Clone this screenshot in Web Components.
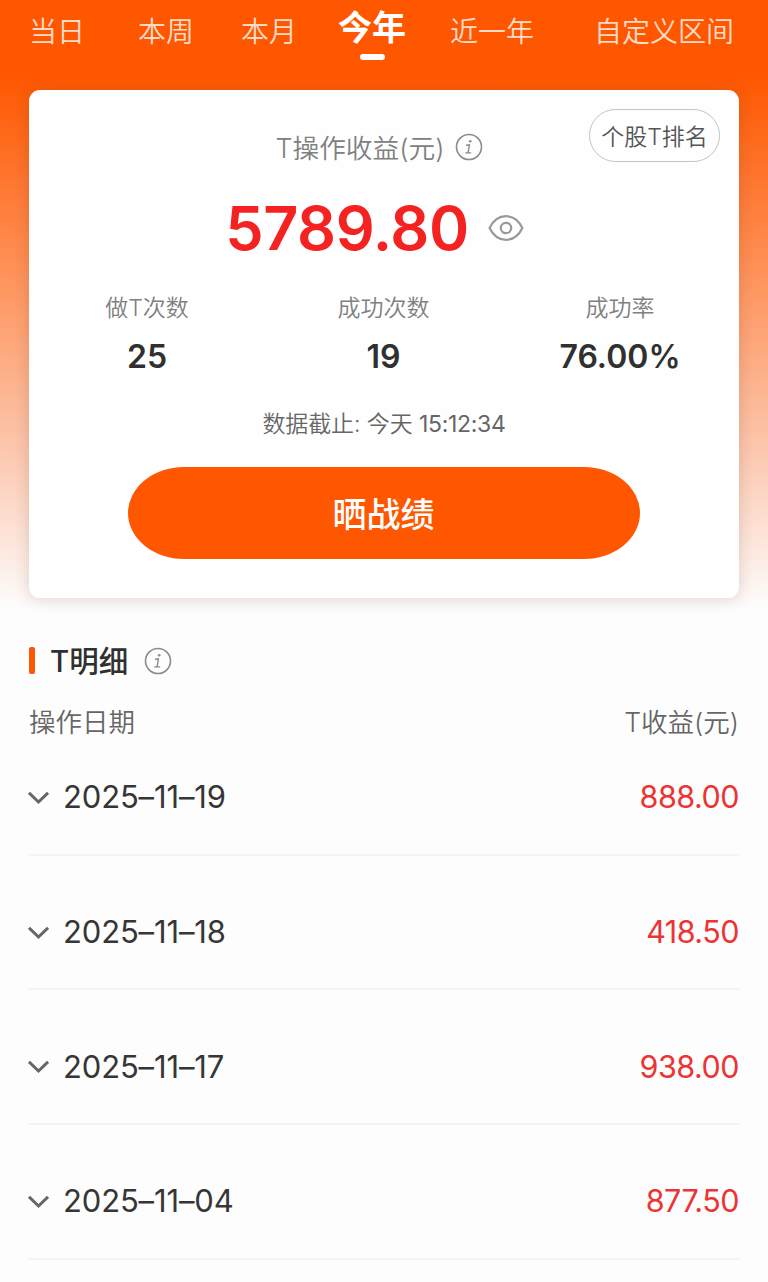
<!DOCTYPE html>
<html lang="zh-CN">
<head>
<meta charset="utf-8">
<title>T操作收益</title>
<style>
body{margin:0;background:#fdfdfd;font-family:Inter,"Noto Sans CJK SC",sans-serif;-webkit-font-smoothing:antialiased}
</style>
</head>
<body>
<profit-page></profit-page>
<script>
const define = (name, html) => {
  const t = document.createElement('template');
  t.innerHTML = html;
  customElements.define(name, class extends HTMLElement {
    constructor() {
      super();
      this.attachShadow({ mode: 'open' }).append(t.content.cloneNode(true));
    }
  });
};

define('period-tab', `<style>
:host{display:flex;flex-direction:column;align-items:center;height:64px;font-size:28px;font-weight:350;line-height:64px;color:#ffdcc8;white-space:nowrap}
:host([active]){font-size:34px;font-weight:700;line-height:56px;color:#fff}
i{display:none;width:25px;height:6px;margin-top:-2px;border-radius:3px;background:#fff}
:host([active]) i{display:block}
</style><slot></slot><i></i>`);

define('period-tabs', `<style>
:host{display:flex;height:90px;padding-left:29px}
</style><slot></slot>`);

define('info-icon', `<style>
:host{display:block;width:28px;height:28px}svg{display:block}
</style><svg width="28" height="28" viewBox="0 0 28 28" fill="none" stroke="#8c8c8c" stroke-linecap="round" stroke-linejoin="round">
<circle cx="14" cy="14" r="12.500" stroke-width="1.600"/>
<path d="M11.600 12.300 14.500 11.800 13 19.800M10.800 19.900H15.600" stroke-width="1.400"/><circle cx="15.200" cy="8.200" r="1.300" fill="#8c8c8c" stroke="none"/></svg>`);

define('eye-icon', `<style>
:host{display:block;width:36px;height:28px}svg{display:block}
</style><svg width="36" height="28" viewBox="0 0 36 28" fill="none" stroke="#999" stroke-width="2.200" stroke-linejoin="round">
<path d="M1.600 14C5.500 6 11.200 2.200 18 2.200S30.500 6 34.400 14C30.500 22 24.800 25.800 18 25.800S5.500 22 1.600 14Z"/><circle cx="18" cy="14" r="5.200"/></svg>`);

define('rank-button', `<style>
:host{display:flex;box-sizing:border-box;width:131px;height:53px;border:1px solid #c4c4c4;border-radius:27px;align-items:center;justify-content:center;font-size:23px;line-height:34px;padding-top:2px;font-weight:350;color:#555;white-space:nowrap}
</style><slot></slot>`);

define('stat-item', `<style>
:host{display:flex;flex-direction:column;align-items:center;width:236.500px}
.l{font-size:23px;line-height:34px;font-weight:350;color:#808080}
.v{font-size:32px;line-height:40px;margin-top:12px;font-weight:600;color:#303030}
</style><div class="l"><slot name="label"></slot></div><div class="v"><slot></slot></div>`);

define('share-button', `<style>
:host{display:flex;box-sizing:border-box;width:512px;height:92px;padding:0 1px 2px 0;border-radius:56px/46px;background:#ff5700;align-items:center;justify-content:center;font-size:34px;font-weight:500;color:#fff}
</style><slot></slot>`);

define('profit-card', `<style>
:host{display:flex;flex-direction:column;align-items:center;box-sizing:border-box;width:710px;height:508px;margin-left:29px;border-radius:11px;background:#fefefe;box-shadow:0 1px 16px rgba(90,50,30,.19);position:relative}
rank-button{position:absolute;right:19px;top:19px}
.title{display:flex;align-items:center;height:40px;margin-top:37px;padding-right:10px;gap:10px;font-size:26.700px;font-weight:350;color:#808080}
.title span{line-height:40px;margin-top:1px}
.sum{display:flex;align-items:center;height:80px;margin-top:21px;padding-right:19px;gap:19px;color:#f52222;font-size:61px;letter-spacing:-.35px;font-weight:600}
.stats{display:flex;height:86px;margin-top:23px;margin-left:-1px}
.time{margin-top:27px;line-height:40px;font-size:23px;letter-spacing:-.1px;font-weight:350;color:#666}
.time span{font-weight:400;letter-spacing:-.3px}
share-button{margin-top:23px}
</style>
<rank-button>个股T排名</rank-button>
<div class="title"><span>T操作收益(元)</span><info-icon></info-icon></div>
<div class="sum"><span>5789.80</span><eye-icon></eye-icon></div>
<div class="stats">
<stat-item><span slot="label">做T次数</span>25</stat-item>
<stat-item><span slot="label">成功次数</span>19</stat-item>
<stat-item><span slot="label">成功率</span>76.00%</stat-item>
</div>
<div class="time">数据截止: 今天 <span>15:12:34</span></div>
<share-button>晒战绩</share-button>`);

define('detail-row', `<style>
:host{display:flex;align-items:center;box-sizing:border-box;height:134.700px;padding-top:19px;border-bottom:2px solid #f3f3f3;font-size:31px;font-weight:400;letter-spacing:-.15px;color:#363636}
svg{display:block;margin:2px 14px 0 -1px}
.a{margin-left:auto;color:#ec3434;font-size:30.500px;letter-spacing:-.5px}
</style><svg width="21" height="14" viewBox="0 0 21 14" fill="none" stroke="#666" stroke-width="3"><path d="M1 1.800 10.500 11 20 1.800"/></svg>
<span><slot></slot></span><span class="a"><slot name="amount"></slot></span>`);

define('detail-list', `<style>
:host{display:block;margin:44px 29px 0}
.h{display:flex;align-items:center;height:37px}
.h i{width:6px;height:27px;border-radius:2px;background:#ff5700;margin-right:15px}
.h b{font-size:29.500px;line-height:37px;margin-top:1px;font-weight:500;color:#303030;margin-right:16px}
.c{display:flex;justify-content:space-between;align-items:center;height:40px;margin-top:21px;margin-bottom:2px;font-size:26.500px;font-weight:350;color:#666}
.rows{margin-top:-21px}
</style>
<div class="h"><i></i><b>T明细</b><info-icon></info-icon></div>
<div class="c"><span>操作日期</span><span>T收益(元)</span></div>
<div class="rows"><slot></slot></div>`);

define('profit-page', `<style>
:host{display:block;height:1282px;overflow:hidden;background:linear-gradient(#ff5700 0,#ff5700 75px,#ff9158 270px,#fcc7ae 450px,#fdfdfd 610px)}
</style>
<period-tabs>
<period-tab>当日</period-tab>
<period-tab style="margin-left:53px">本周</period-tab>
<period-tab style="margin-left:47px">本月</period-tab>
<period-tab active style="margin-left:41px">今年</period-tab>
<period-tab style="margin-left:44px">近一年</period-tab>
<period-tab style="margin-left:60px">自定义区间</period-tab>
</period-tabs>
<profit-card></profit-card>
<detail-list>
<detail-row>2025–11–19<span slot="amount">888.00</span></detail-row>
<detail-row>2025–11–18<span slot="amount">418.50</span></detail-row>
<detail-row>2025–11–17<span slot="amount">938.00</span></detail-row>
<detail-row>2025–11–04<span slot="amount">877.50</span></detail-row>
</detail-list>`);
</script>
</body>
</html>
